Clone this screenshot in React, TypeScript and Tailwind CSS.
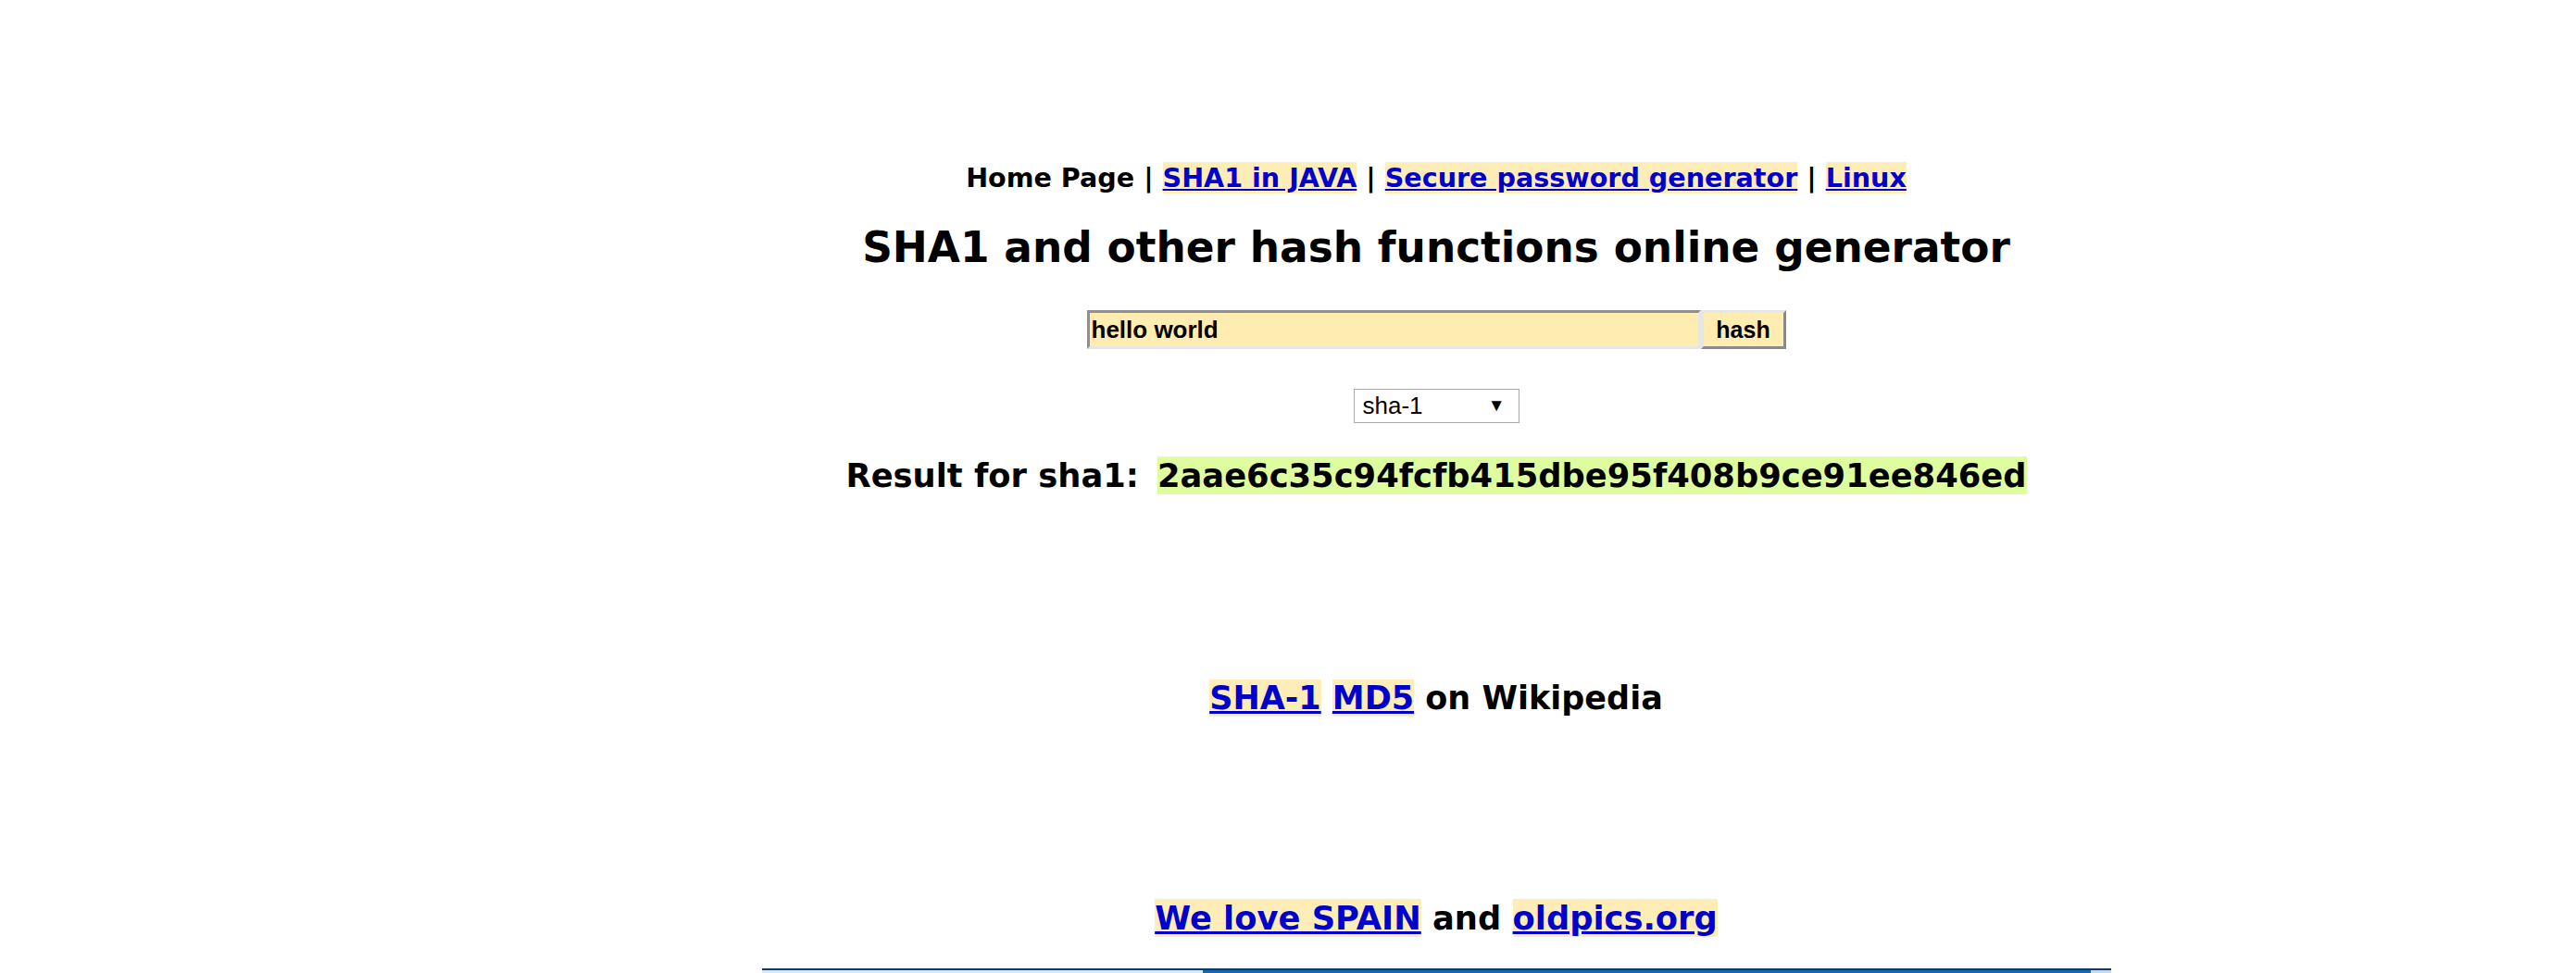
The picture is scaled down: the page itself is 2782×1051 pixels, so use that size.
export default function App() {
  const verdana = "font-['Verdana','DejaVu_Sans',sans-serif] font-bold";
  const hl = "bg-[#ffedb8] text-[#0000cc] underline";
  return (
    <div className="flex h-[1051px] w-full overflow-hidden bg-white text-black">
      <div className="w-[320px] shrink-0" />
      <main className="flex flex-1 flex-col items-center text-center">
        <nav className={`${verdana} pt-[175px] text-[28.6px] leading-[34px]`}>
          Home Page |{" "}
          <a href="#" className={hl}>
            SHA1 in JAVA
          </a>{" "}
          |{" "}
          <a href="#" className={hl}>
            Secure password generator
          </a>{" "}
          |{" "}
          <a href="#" className={hl}>
            Linux
          </a>
        </nav>

        <h1 className={`${verdana} mt-[31px] text-[45.4px] leading-[56px]`}>
          SHA1 and other hash functions online generator
        </h1>

        <form className="mt-[39px] flex h-[42px]">
          <input
            defaultValue="hello world"
            className="h-full w-[663px] border-[3px] border-t-[#8f8f8f] border-l-[#8f8f8f] border-r-[#e6e6e6] border-b-[#e6e6e6] bg-[#ffecb0] pl-[2px] font-['Liberation_Sans',sans-serif] text-[26px] font-bold outline-none"
          />
          <button
            type="button"
            className="h-full w-[92px] border-[3px] border-t-[#e6e6e6] border-l-[#e6e6e6] border-r-[#8a8a8a] border-b-[#8a8a8a] bg-[#ffecb0] font-['Liberation_Sans',sans-serif] text-[25px] font-bold"
          >
            hash
          </button>
        </form>

        <div className="mt-[43px] flex h-[37px] w-[179px] items-center justify-between border border-[#a9a9a9] bg-white pl-[9px] pr-[14px] font-['Liberation_Sans',sans-serif] text-[26px]">
          <span>sha-1</span>
          <span className="text-[19px]">▼</span>
        </div>

        <p className={`${verdana} mt-[35px] text-[35.3px] leading-[44px]`}>
          Result for sha1:
          <span className="ml-[20px] bg-[#ddfd9f]">
            2aae6c35c94fcfb415dbe95f408b9ce91ee846ed
          </span>
        </p>

        <p className={`${verdana} mt-[196px] text-[35px] leading-[44px]`}>
          <a href="#" className={hl}>
            SHA-1
          </a>{" "}
          <a href="#" className={hl}>
            MD5
          </a>{" "}
          on Wikipedia
        </p>

        <p className={`${verdana} mt-[194px] text-[35.3px] leading-[44px]`}>
          <a href="#" className={hl}>
            We love SPAIN
          </a>{" "}
          and{" "}
          <a href="#" className={hl}>
            oldpics.org
          </a>
        </p>

        <div className="mt-[32px] flex h-[20px] w-[1457px] shrink-0 border-t-2 border-[#0b3a66]">
          <div className="w-[476px] bg-[#dbe7f3]" />
          <div className="flex-1 bg-[#1766b3]" />
          <div className="w-[22px] bg-[#c9d9ea]" />
        </div>
      </main>
    </div>
  );
}
